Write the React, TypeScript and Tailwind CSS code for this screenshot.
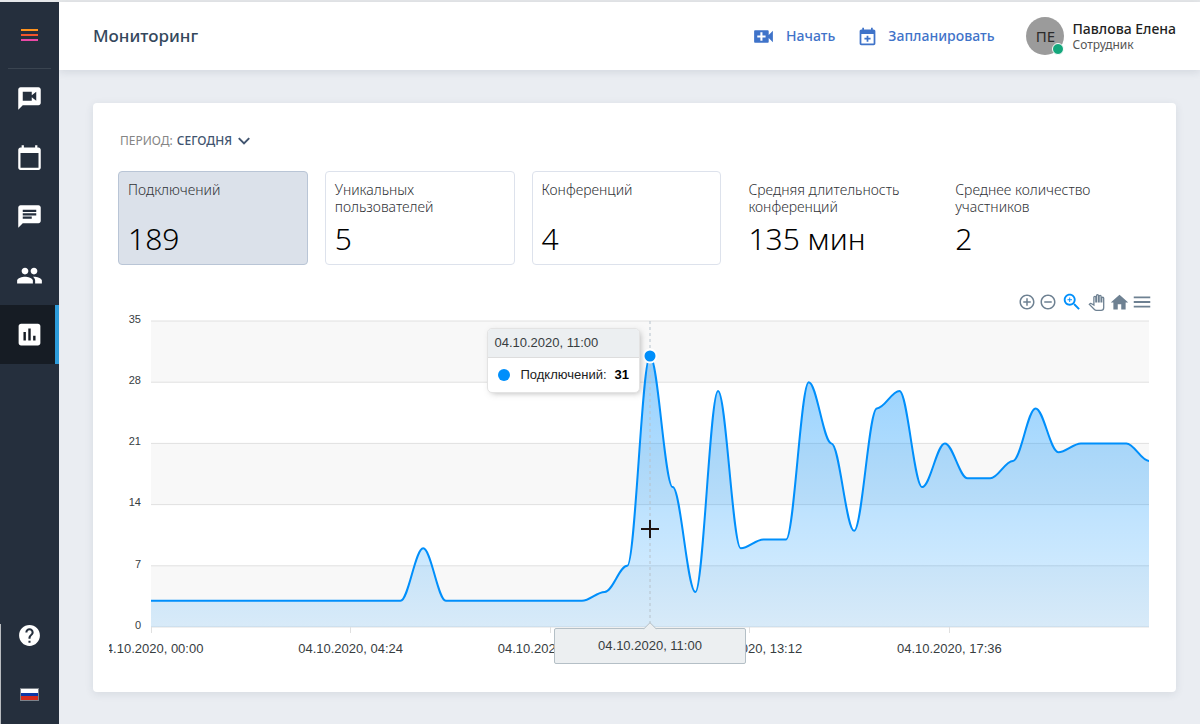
import type { ReactNode } from 'react';

const POINTS = [
  3, 3, 3, 3, 3, 3, 3, 3, 3, 3, 3, 3, 9, 3, 3, 3, 3, 3, 3, 3, 4, 7, 31, 16, 4, 27, 9, 10, 10, 28, 21, 11, 25, 27,
  16, 21, 17, 17, 19, 25, 20, 21, 21, 21, 19,
];
const MAX = 35;
const HOVERED = 22;
const Y_LABELS = [35, 28, 21, 14, 7, 0];
const X_LABELS = [
  '04.10.2020, 00:00',
  '04.10.2020, 04:24',
  '04.10.2020, 08:48',
  '04.10.2020, 13:12',
  '04.10.2020, 17:36',
];

const STATS = [
  { label: 'Подключений', value: '189', selectable: true, active: true },
  { label: 'Уникальных пользователей', value: '5', selectable: true, active: false },
  { label: 'Конференций', value: '4', selectable: true, active: false },
  { label: 'Средняя длительность конференций', value: '135 мин', selectable: false, active: false },
  { label: 'Среднее количество участников', value: '2', selectable: false, active: false },
];

const ICONS = {
  videoChat:
    'M20 2H4c-1.1 0-2 .9-2 2v18l4-4h14c1.1 0 2-.9 2-2V4c0-1.1-.9-2-2-2zm-2 12l-4-3.2V14H6V6h8v3.2L18 6v8z',
  calendar:
    'M20 3h-1V1h-2v2H7V1H5v2H4c-1.1 0-2 .9-2 2v16c0 1.1.9 2 2 2h16c1.1 0 2-.9 2-2V5c0-1.1-.9-2-2-2zm0 18H4V8h16v13z',
  chat: 'M20 2H4c-1.1 0-1.99.9-1.99 2L2 22l4-4h14c1.1 0 2-.9 2-2V4c0-1.1-.9-2-2-2zM6 9h12v2H6V9zm8 5H6v-2h8v2zm4-6H6V6h12v2z',
  people:
    'M16 11c1.66 0 2.99-1.34 2.99-3S17.66 5 16 5c-1.66 0-3 1.34-3 3s1.34 3 3 3zm-8 0c1.66 0 2.99-1.34 2.99-3S9.66 5 8 5C6.34 5 5 6.34 5 8s1.34 3 3 3zm0 2c-2.33 0-7 1.17-7 3.5V19h14v-2.5c0-2.33-4.67-3.5-7-3.5zm8 0c-.29 0-.62.02-.97.05 1.16.84 1.97 1.97 1.97 3.45V19h6v-2.5c0-2.33-4.67-3.5-7-3.5z',
  assessment:
    'M19 3H5c-1.1 0-2 .9-2 2v14c0 1.1.9 2 2 2h14c1.1 0 2-.9 2-2V5c0-1.1-.9-2-2-2zM9 17H7v-7h2v7zm4 0h-2V7h2v10zm4 0h-2v-4h2v4z',
  help: 'M12 2C6.48 2 2 6.48 2 12s4.48 10 10 10 10-4.48 10-10S17.52 2 12 2zm1 17h-2v-2h2v2zm2.07-7.75l-.9.92C13.45 12.9 13 13.5 13 15h-2v-.5c0-1.1.45-2.1 1.17-2.83l1.24-1.26c.37-.36.59-.86.59-1.41 0-1.1-.9-2-2-2s-2 .9-2 2H8c0-2.21 1.79-4 4-4s4 1.79 4 4c0 .88-.36 1.68-.93 2.25z',
  videoCall:
    'M17 10.5V7c0-.55-.45-1-1-1H4c-.55 0-1 .45-1 1v10c0 .55.45 1 1 1h12c.55 0 1-.45 1-1v-3.5l4 4v-11l-4 4zM14 13h-3v3H9v-3H6v-2h3V8h2v3h3v2z',
  schedule:
    'M19 4h-1V2h-2v2H8V2H6v2H5c-1.1 0-2 .9-2 2v14c0 1.1.9 2 2 2h14c1.1 0 2-.9 2-2V6c0-1.1-.9-2-2-2zm0 16H5V9h14v11zM11 11h2v2.5h2.500v2H13V18h-2v-2.500H8.500v-2H11z',
  plusCircle:
    'M13 7h-2v4H7v2h4v4h2v-4h4v-2h-4V7zm-1-5C6.49 2 2 6.49 2 12s4.49 10 10 10 10-4.49 10-10S17.51 2 12 2zm0 18c-4.41 0-8-3.59-8-8s3.59-8 8-8 8 3.59 8 8-3.59 8-8 8z',
  minusCircle:
    'M7 11v2h10v-2H7zm5-9C6.48 2 2 6.48 2 12s4.48 10 10 10 10-4.48 10-10S17.52 2 12 2zm0 18c-4.41 0-8-3.59-8-8s3.59-8 8-8 8 3.59 8 8-3.59 8-8 8z',
  zoom: 'M15.5 14h-.79l-.28-.27C15.41 12.59 16 11.11 16 9.5 16 5.91 13.09 3 9.5 3S3 5.91 3 9.5 5.91 16 9.5 16c1.61 0 3.09-.59 4.23-1.57l.27.28v.79l5 4.99L20.49 19l-4.99-5zm-6 0C7.01 14 5 11.99 5 9.5S7.01 5 9.5 5 14 7.01 14 9.5 11.99 14 9.5 14zM12 10h-2v2H9v-2H7V9h2V7h1v2h2v1z',
  hand: 'M23 5.5V20c0 2.2-1.8 4-4 4h-7.3c-1.08 0-2.1-.43-2.85-1.19L1 14.83s1.26-1.23 1.3-1.25c.22-.19.49-.29.79-.29.22 0 .42.06.6.16.04.01 4.31 2.46 4.31 2.46V4c0-.83.67-1.5 1.5-1.5S11 3.17 11 4v7h1V1.5c0-.83.67-1.5 1.5-1.5S15 .67 15 1.5V11h1V2.5c0-.83.67-1.5 1.5-1.5s1.5.67 1.5 1.5V11h1V5.5c0-.83.67-1.5 1.5-1.5s1.5.67 1.5 1.5z',
  home: 'M10 20v-6h4v6h5v-8h3L12 3 2 12h3v8z',
  menu: 'M3 18h18v-2H3v2zm0-5h18v-2H3v2zm0-7v2h18V6H3z',
  chevron: 'M6 7.200L12 13.200l6-6 1.900 1.900L12 17 4.100 9.100z',
};

function Icon({ d, className }: { d: string; className: string }) {
  return (
    <svg viewBox="0 0 24 24" fill="currentColor" aria-hidden="true" className={className}>
      <path d={d} />
    </svg>
  );
}

function linePath() {
  return POINTS.map((v, i) => {
    const y = MAX - v;
    if (i === 0) return `M0 ${y}`;
    const prev = MAX - POINTS[i - 1];
    return `C${i - 0.65} ${prev} ${i - 0.35} ${y} ${i} ${y}`;
  }).join(' ');
}

function NavItem({ label, active = false, children }: { label: string; active?: boolean; children: ReactNode }) {
  return (
    <a
      href="#"
      aria-label={label}
      aria-current={active ? 'page' : undefined}
      className={
        active
          ? 'flex h-[59px] items-center justify-center border-r-4 border-[#2d9cdb] bg-[#161c24] pl-1 text-white'
          : 'flex h-[59px] items-center justify-center text-white'
      }
    >
      {children}
    </a>
  );
}

function Sidebar() {
  return (
    <aside className="relative flex w-[59px] shrink-0 flex-col bg-[#252f3d]">
      <div className="flex h-[66px] items-center justify-center">
        <button type="button" aria-label="Меню" className="flex flex-col gap-[3px]">
          <span className="h-0.5 w-[17px] bg-[#ff931e]" />
          <span className="h-0.5 w-[17px] bg-[#f2542d]" />
          <span className="h-0.5 w-[17px] bg-[#ea49a6]" />
        </button>
      </div>
      <nav className="flex flex-1 flex-col">
        <div className="mx-2 h-px bg-[#3a4450]" />
        <NavItem label="Конференции">
          <Icon d={ICONS.videoChat} className="size-[27px]" />
        </NavItem>
        <NavItem label="Календарь">
          <Icon d={ICONS.calendar} className="size-[27px]" />
        </NavItem>
        <NavItem label="Чат">
          <Icon d={ICONS.chat} className="size-[27px]" />
        </NavItem>
        <NavItem label="Контакты">
          <Icon d={ICONS.people} className="size-[27px]" />
        </NavItem>
        <NavItem label="Мониторинг" active>
          <Icon d={ICONS.assessment} className="size-[29px]" />
        </NavItem>
        <div className="mt-auto">
          <NavItem label="Помощь">
            <Icon d={ICONS.help} className="size-[25px]" />
          </NavItem>
          <NavItem label="Русский">
            <span className="flex h-[13px] w-[19px] flex-col border border-[#7d838b]">
              <span className="flex-1 bg-white" />
              <span className="flex-1 bg-[#0b37a8]" />
              <span className="flex-1 bg-[#d52b1e]" />
            </span>
          </NavItem>
        </div>
      </nav>
      <span className="absolute bottom-0 left-0 h-[100px] w-px bg-[#b9bcc0]" />
    </aside>
  );
}

function Header() {
  return (
    <header className="flex h-[68px] items-center bg-white pr-6 pl-[34px] shadow-[0_2px_8px_rgba(40,60,80,0.12)]">
      <h1 className="flex-1 text-[17px] font-medium text-[#34475c]">Мониторинг</h1>
      <div className="flex items-center gap-[22px] text-sm font-medium text-[#3f73c9]">
        <button type="button" className="flex items-center gap-2.5">
          <Icon d={ICONS.videoCall} className="size-[25px]" />
          Начать
        </button>
        <button type="button" className="flex items-center gap-2.5">
          <Icon d={ICONS.schedule} className="size-[21px]" />
          Запланировать
        </button>
      </div>
      <div className="ml-8 flex items-center gap-2">
        <div className="relative flex size-[38px] items-center justify-center rounded-full bg-[#9b9b9b] text-[15px] text-[#2b2b2b]">
          ПЕ
          <span className="absolute right-0 bottom-0 size-3 rounded-full border border-white bg-[#14a77c]" />
        </div>
        <div className="text-[#1f1f1f]">
          <p className="text-sm leading-[17px] font-medium">Павлова Елена</p>
          <p className="text-xs leading-4 text-[#555]">Сотрудник</p>
        </div>
      </div>
    </header>
  );
}

function StatCards() {
  return (
    <div className="mt-5 mr-[25px] ml-[9px] grid grid-cols-5 gap-[17px]">
      {STATS.map((s) => {
        const body = (
          <>
            <span className="h-[34px] text-sm leading-[17px] font-light text-[#2f3236]">{s.label}</span>
            <span className="mt-1.5 text-3xl leading-9 font-light text-black">{s.value}</span>
          </>
        );
        if (!s.selectable) {
          return (
            <div key={s.label} className="flex h-[94px] flex-col border border-transparent pt-[9px] pl-[9px]">
              {body}
            </div>
          );
        }
        return (
          <button
            key={s.label}
            type="button"
            aria-pressed={s.active}
            className={
              s.active
                ? 'flex h-[94px] flex-col rounded border border-[#b9c5d6] bg-[#dbe1ea] pt-[9px] pl-[9px] text-left'
                : 'flex h-[94px] flex-col rounded border border-[#dde2ec] bg-white pt-[9px] pl-[9px] text-left'
            }
          >
            {body}
          </button>
        );
      })}
    </div>
  );
}

function Toolbar() {
  return (
    <div className="mt-[25px] mr-2 flex h-6 items-center justify-end text-[#6e8192]">
      <button type="button" aria-label="Увеличить" className="flex w-[21px] justify-center">
        <Icon d={ICONS.plusCircle} className="size-[18px]" />
      </button>
      <button type="button" aria-label="Уменьшить" className="flex w-[21px] justify-center">
        <Icon d={ICONS.minusCircle} className="size-[18px]" />
      </button>
      <button type="button" aria-label="Выделить область" className="flex w-7 justify-center text-[#008ffb]">
        <Icon d={ICONS.zoom} className="size-[22px]" />
      </button>
      <button type="button" aria-label="Сдвинуть" className="flex w-5 justify-center">
        <svg
          viewBox="-1 -1 26 26"
          fill="#fff"
          stroke="currentColor"
          strokeWidth="2"
          aria-hidden="true"
          className="size-[17px]"
        >
          <path d={ICONS.hand} />
        </svg>
      </button>
      <button type="button" aria-label="Сбросить масштаб" className="flex w-[26px] justify-center">
        <Icon d={ICONS.home} className="size-[21px]" />
      </button>
      <button type="button" aria-label="Меню графика" className="flex w-5 justify-center">
        <Icon d={ICONS.menu} className="size-[22px] shrink-0" />
      </button>
    </div>
  );
}

function Chart() {
  const line = linePath();
  const peakTop = `${((MAX - POINTS[HOVERED]) / MAX) * 100}%`;
  return (
    <div className="mr-[11px] font-['Liberation_Sans',Arial,sans-serif] text-[#373d3f]">
      <div className="mt-[7px] flex h-[306px]">
        <div className="-mt-0.5 flex h-full w-8 flex-col justify-between text-right text-[11px]">
          {Y_LABELS.map((y) => (
            <span key={y} className="flex h-0 items-center justify-end">
              {y}
            </span>
          ))}
        </div>
        <div className="relative ml-2.5 flex-1">
          <svg
            viewBox="0 0 44 35"
            preserveAspectRatio="none"
            role="img"
            aria-label="График подключений"
            className="block h-full w-full overflow-visible"
          >
            <defs>
              <linearGradient id="area" x1="0" y1="0" x2="0" y2="1">
                <stop offset="0" stopColor="#008ffb" stopOpacity="0.42" />
                <stop offset="1" stopColor="#008ffb" stopOpacity="0.13" />
              </linearGradient>
            </defs>
            {[0, 14, 28].map((y) => (
              <rect key={y} x="0" y={y} width="44" height="7" fill="#f8f8f8" />
            ))}
            {Y_LABELS.map((y) => (
              <line key={y} x1="0" x2="44" y1={y} y2={y} stroke="#e0e0e0" vectorEffect="non-scaling-stroke" />
            ))}
            <path d={`${line} L44 35 L0 35 Z`} fill="url(#area)" />
            <path d={line} fill="none" stroke="#008ffb" strokeWidth="2" vectorEffect="non-scaling-stroke" />
            <line
              x1={HOVERED}
              x2={HOVERED}
              y1="0"
              y2="35"
              stroke="#b6c2cc"
              strokeDasharray="3 3"
              vectorEffect="non-scaling-stroke"
            />
          </svg>
          <span
            className="absolute left-1/2 size-[15px] -translate-x-1/2 -translate-y-1/2 rounded-full border-2 border-white bg-[#008ffb]"
            style={{ top: peakTop }}
          />
          <svg
            viewBox="0 0 20 20"
            stroke="#1e1310"
            strokeWidth="2"
            aria-hidden="true"
            className="absolute top-[198px] left-1/2 size-5 -translate-x-1/2"
          >
            <path d="M10 1v18M1 10h18" />
          </svg>
          <div
            role="tooltip"
            className="absolute top-[7px] right-[calc(50%+10px)] overflow-hidden rounded-[5px] border border-[#e3e3e3] bg-white text-[13px] whitespace-nowrap shadow-[2px_2px_6px_-2px_rgba(100,100,100,0.5)]"
          >
            <p className="border-b border-[#dddddd] bg-[#eceff1] px-1.5 leading-7">04.10.2020, 11:00</p>
            <p className="flex h-[34px] items-center px-2.5 text-[#222]">
              <span className="mr-2.5 size-3 rounded-full bg-[#008ffb]" />
              <span>Подключений:</span>
              <b className="ml-2 text-black">31</b>
            </p>
          </div>
        </div>
      </div>
      <div className="relative">
        <div className="overflow-hidden pl-[42px]">
          <div className="flex justify-between text-[13px]">
            {X_LABELS.map((t) => (
              <div key={t} className="flex w-0 flex-col items-center">
                <span className="h-1.5 w-px bg-[#e0e0e0]" />
                <span className="mt-[7px] leading-[18px] whitespace-nowrap">{t}</span>
              </div>
            ))}
            <div className="w-0" />
          </div>
        </div>
        <div className="absolute top-px right-0 left-[42px] flex justify-center">
          <div className="relative flex h-9 w-[192px] items-center justify-center rounded-xs border border-[#b4bfc6] bg-[#eceff1] text-[13px]">
            04.10.2020, 11:00
            <svg viewBox="0 0 14 8" aria-hidden="true" className="absolute -top-[7px] left-[88px] h-2 w-3.5">
              <path d="M0 7.500 7 .700l7 6.800V8H0z" fill="#eceff1" />
              <path d="M.500 7.200 7 .700l6.500 6.500" fill="none" stroke="#b4bfc6" />
            </svg>
          </div>
        </div>
      </div>
    </div>
  );
}

export default function App() {
  return (
    <div className="flex min-h-screen flex-col bg-[#eaedf2] font-['Noto_Sans','Open_Sans',sans-serif]">
      <div className="h-0.5 bg-[#e6e8ea]" />
      <div className="flex flex-1">
        <Sidebar />
        <div className="min-w-0 flex-1">
          <Header />
          <main className="pt-[33px] pr-6 pb-8 pl-[34px]">
            <section className="rounded bg-white px-4 pt-7 pb-[34px] shadow-[0_2px_8px_rgba(40,60,80,0.1)]">
              <div className="ml-[11px] flex h-5 items-center text-xs uppercase">
                <label htmlFor="period" className="mr-1 text-[#858585]">
                  Период:
                </label>
                <select
                  id="period"
                  defaultValue="today"
                  className="appearance-none bg-transparent font-medium text-[#41546f] uppercase"
                >
                  <option value="today">Сегодня</option>
                </select>
                <Icon d={ICONS.chevron} className="ml-0.5 size-[18px] text-[#41546f]" />
              </div>
              <StatCards />
              <Toolbar />
              <Chart />
            </section>
          </main>
        </div>
      </div>
    </div>
  );
}
